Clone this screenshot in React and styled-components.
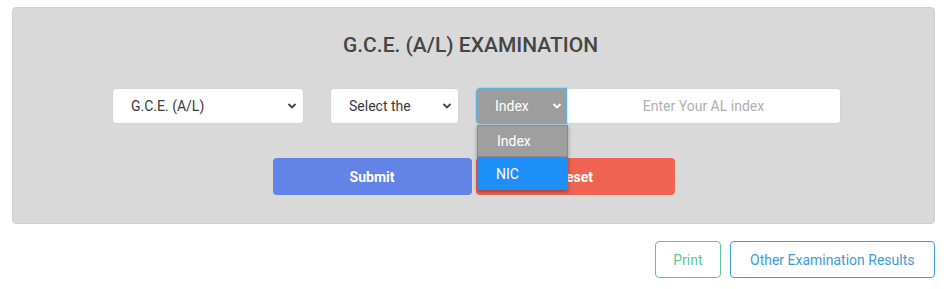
import React from "react";
import styled, { createGlobalStyle } from "styled-components";

const GlobalStyle = createGlobalStyle`
  body {
    margin: 0;
    background: #ffffff;
    font-family: Roboto, "Liberation Sans", sans-serif;
  }
`;

const Page = styled.div`
  padding: 7px 12px 0;
`;

const Panel = styled.div`
  background: #d9d9d9;
  border: 1px solid #cfcfcf;
  border-radius: 4px;
  padding: 25px 0 28px;
`;

const Title = styled.h2`
  margin: 0;
  padding-right: 6px;
  text-align: center;
  font-size: 21px;
  line-height: 24px;
  font-weight: 500;
  color: #454545;
`;

const FieldRow = styled.div`
  display: flex;
  justify-content: center;
  padding-left: 6px;
  margin-top: 31px;
`;

const Select = styled.div`
  position: relative;
  box-sizing: border-box;
  width: ${(p) => p.width}px;
  flex-shrink: 0;
  height: 36px;
  margin-right: ${(p) => p.gap || 0}px;
  display: flex;
  align-items: center;
  justify-content: space-between;
  padding: 0 ${(p) => (p.dark ? 4 : 6)}px 0 18px;
  background: ${(p) => (p.dark ? "#9d9d9d" : "#ffffff")};
  color: ${(p) => (p.dark ? "#ffffff" : "#3a3a3a")};
  border: 1px solid ${(p) => (p.dark ? "#5fb3e2" : "#d4d4d4")};
  border-radius: ${(p) => (p.dark ? "4px 0 0 4px" : "4px")};
  font-size: 14px;
  box-shadow: ${(p) => (p.dark ? "0 0 0 1px rgba(95, 179, 226, 0.25)" : "none")};
`;

const InputGroup = styled.div`
  display: flex;
  width: 365px;
`;

const TextInput = styled.div`
  flex: 1;
  box-sizing: border-box;
  height: 36px;
  display: flex;
  align-items: center;
  justify-content: center;
  background: #ffffff;
  border: 1px solid #d4d4d4;
  border-left: none;
  border-radius: 0 4px 4px 0;
  color: #b0b0b0;
  font-size: 14px;
`;

const Menu = styled.div`
  position: absolute;
  top: 36px;
  left: 0;
  width: 91px;
  box-shadow: 0 2px 4px rgba(0, 0, 0, 0.35);
  z-index: 2;
`;

const MenuItem = styled.div`
  box-sizing: border-box;
  height: ${(p) => p.h}px;
  display: flex;
  align-items: center;
  padding-left: 19px;
  font-size: 14px;
  color: #ffffff;
  background: ${(p) => (p.active ? "#1e8ff9" : "#9f9f9f")};
  border: ${(p) => (p.active ? "none" : "1px solid #8a8a8a")};
`;

const ButtonRow = styled.div`
  display: flex;
  justify-content: center;
  gap: 4px;
  margin-top: 34px;
`;

const ActionButton = styled.button`
  width: 199px;
  height: 37px;
  border: none;
  border-radius: 4px;
  background: ${(p) => p.bg};
  color: #ffffff;
  font-family: Roboto, "Liberation Sans", sans-serif;
  font-size: 14px;
  font-weight: 700;
`;

const Footer = styled.div`
  display: flex;
  justify-content: flex-end;
  gap: 9px;
  margin-top: 17px;
`;

const OutlineButton = styled.button`
  height: 37px;
  padding: 0 ${(p) => p.pad}px;
  background: #ffffff;
  border: 1px solid ${(p) => p.color};
  border-radius: 4px;
  color: ${(p) => p.color};
  font-family: Roboto, "Liberation Sans", sans-serif;
  font-size: 14px;
`;

const Chevron = ({ color }) => (
  <svg width="10" height="6" viewBox="0 0 10 6">
    <path d="M1.5 1 L5 4.5 L8.5 1" fill="none" stroke={color} strokeWidth="1.8" />
  </svg>
);

export default function App() {
  return (
    <Page>
      <GlobalStyle />
      <Panel>
        <Title>G.C.E. (A/L) EXAMINATION</Title>
        <FieldRow>
          <Select width={192} gap={26}>
            G.C.E. (A/L)
            <Chevron color="#444" />
          </Select>
          <Select width={129} gap={17}>
            Select the
            <Chevron color="#444" />
          </Select>
          <InputGroup>
            <Select width={91} dark>
              Index
              <Chevron color="#fff" />
              <Menu>
                <MenuItem h={32}>Index</MenuItem>
                <MenuItem h={33} active>
                  NIC
                </MenuItem>
              </Menu>
            </Select>
            <TextInput>Enter Your AL index</TextInput>
          </InputGroup>
        </FieldRow>
        <ButtonRow>
          <ActionButton bg="#6383e6">Submit</ActionButton>
          <ActionButton bg="#ee6352">Reset</ActionButton>
        </ButtonRow>
      </Panel>
      <Footer>
        <OutlineButton color="#5cc79c" pad={17}>
          Print
        </OutlineButton>
        <OutlineButton color="#3d9bd8" pad={19.5}>
          Other Examination Results
        </OutlineButton>
      </Footer>
    </Page>
  );
}
